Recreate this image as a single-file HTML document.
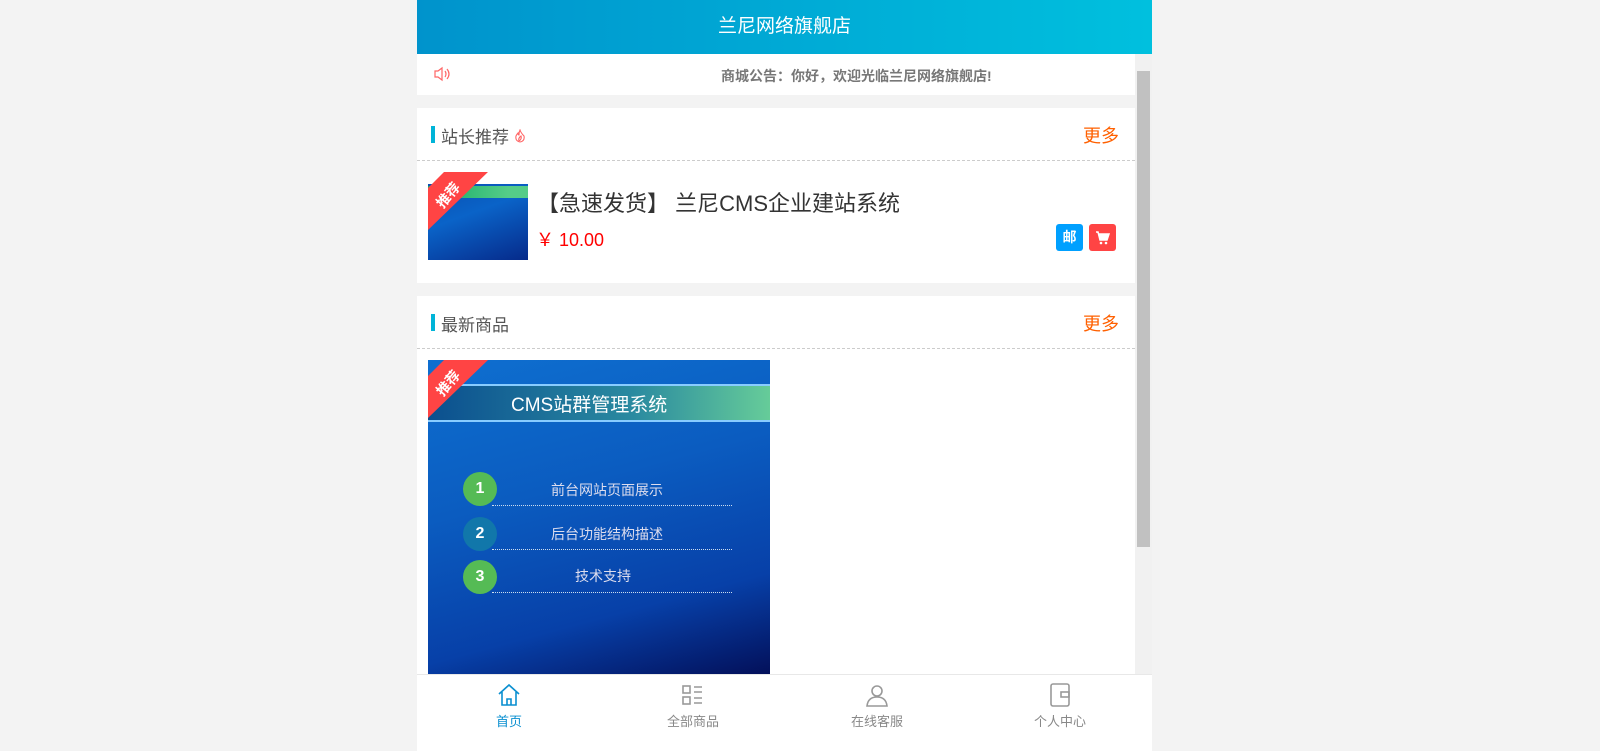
<!DOCTYPE html>
<html><head><meta charset="utf-8"><style>
*{margin:0;padding:0;box-sizing:border-box}
body{width:1600px;height:751px;background:#f3f3f3;font-family:"Liberation Sans","Noto Sans CJK SC",sans-serif;overflow:hidden;position:relative}
.wrap{position:absolute;left:417px;top:0;width:735px;height:751px}
.hd{height:54px;background:linear-gradient(90deg,#0093cc,#00c0de);color:#fff;font-size:19px;text-align:center;line-height:54px}
.sb{position:absolute;left:718px;top:54px;width:17px;height:620px;background:#f1f1f1}
.sb .t{position:absolute;left:2px;top:17px;width:13px;height:476px;background:#c1c1c1}
.note{position:absolute;top:54px;left:0;width:718px;height:41px;background:#fff}
.note span{position:absolute;left:304px;top:12px;font-size:14px;color:#777;font-weight:bold}
.sec{position:absolute;left:0;width:718px;background:#fff}
.ttl{height:53px;border-bottom:1px dashed #ccc;position:relative}
.ttl .b{position:absolute;left:14px;top:18px;width:4px;height:17px;background:#00b4d8}
.ttl .n{position:absolute;left:24px;top:15px;font-size:17px;color:#555}
.ttl .m{position:absolute;right:16px;top:14px;font-size:18px;color:#ff6000}
.rib{position:absolute;left:11px;width:60px;height:60px}
.rib .r{position:absolute;left:0;top:0;width:60px;height:60px;background:#f44;clip-path:polygon(16px 0,60px 0,0 58px,0 16px)}
.rib span{position:absolute;left:2px;top:13px;width:36px;text-align:center;color:#fff;font-size:14px;font-weight:bold;transform:rotate(-50deg)}
.nav{position:absolute;left:0;top:674px;width:735px;height:77px;background:#fff;border-top:1px solid #e8e8e8}
.nav div{position:absolute;top:0;width:184px;text-align:center;font-size:13px;color:#888}
.nav svg{display:block;margin:8px auto 4px}
</style></head><body>
<div class="wrap">
<div class="hd">兰尼网络旗舰店</div>
<div class="note"><svg style="position:absolute;left:16px;top:12px" width="20" height="16" viewBox="0 0 20 16" fill="none" stroke="#f66" stroke-width="1.2"><path d="M2 5h3l4-3v12l-4-3H2z"/><path d="M12 5q2 3 0 6M14 3q4 5 0 10"/></svg><span>商城公告：你好，欢迎光临兰尼网络旗舰店!</span></div>
<div class="sec" style="top:108px;height:175px">
<div class="ttl"><div class="b"></div><div class="n">站长推荐 <svg width="12" height="14" viewBox="0 0 12 14" fill="none" stroke="#f66" stroke-width="1.1"><path d="M6 1q1 3 4 6q1 5-4 6q-5-1-4-6q1-2 2-3q0 2 1 2q0-3 1-5zM5 12q-1-3 2-5q1 3-2 5"/></svg></div><div class="m">更多</div></div>
<div style="position:absolute;left:11px;top:76px;width:100px;height:76px;background:linear-gradient(160deg,#0a4fb0,#0a63c8 40%,#062a8a)"><div style="margin-top:2px;height:12px;background:linear-gradient(90deg,#1a6,#5c8 80%)"></div></div>
<div class="rib" style="top:64px"><div class="r"></div><span>推荐</span></div>
<div style="position:absolute;left:120px;top:78px;font-size:22px;color:#333">【急速发货】 兰尼CMS企业建站系统</div>
<div style="position:absolute;left:119px;top:118px;font-size:18px;color:#f00">￥ 10.00</div>
<div style="position:absolute;left:639px;top:116px;width:27px;height:27px;background:#00a0ff;border-radius:3px;color:#fff;font-size:14px;text-align:center;line-height:27px;font-weight:bold">邮</div>
<div style="position:absolute;left:672px;top:116px;width:27px;height:27px;background:#f44;border-radius:3px"><svg width="27" height="27" viewBox="0 0 27 27"><path d="M7 8h2l2 8h7l2-6H10" fill="#fff" stroke="#fff" stroke-width="1.5"/><circle cx="12" cy="19" r="1.3" fill="#fff"/><circle cx="17" cy="19" r="1.3" fill="#fff"/></svg></div>
</div>
<div class="sec" style="top:296px;height:378px">
<div class="ttl"><div class="b"></div><div class="n">最新商品</div><div class="m">更多</div></div>
<div style="position:absolute;left:11px;top:64px;width:342px;height:314px;background:linear-gradient(165deg,#0e6fd0,#0b5cc0 40%,#0740a8 75%,#03105a);overflow:hidden">
<div style="position:absolute;left:0;top:24px;width:342px;height:38px;background:linear-gradient(90deg,#0b4f8f,#2a8aa0 60%,#6c9 100%);border-top:2px solid #8cf;border-bottom:2px solid #8cf"></div>
<div style="position:absolute;left:83px;top:30px;color:#fff;font-size:19px">CMS站群管理系统</div>
<div style="position:absolute;left:35px;top:112px;width:34px;height:34px;border-radius:50%;background:#5b5;color:#fff;text-align:center;line-height:34px;font-weight:bold">1</div>
<div style="position:absolute;left:123px;top:120px;color:#dde;font-size:14px">前台网站页面展示</div>
<div style="position:absolute;left:64px;top:145px;width:240px;border-top:1px dotted #cde"></div>
<div style="position:absolute;left:35px;top:157px;width:34px;height:34px;border-radius:50%;background:#17a;color:#fff;text-align:center;line-height:34px;font-weight:bold">2</div>
<div style="position:absolute;left:123px;top:164px;color:#dde;font-size:14px">后台功能结构描述</div>
<div style="position:absolute;left:64px;top:189px;width:240px;border-top:1px dotted #cde"></div>
<div style="position:absolute;left:35px;top:200px;width:34px;height:34px;border-radius:50%;background:#5b5;color:#fff;text-align:center;line-height:34px;font-weight:bold">3</div>
<div style="position:absolute;left:147px;top:206px;color:#dde;font-size:14px">技术支持</div>
<div style="position:absolute;left:64px;top:232px;width:240px;border-top:1px dotted #cde"></div>
</div>
<div class="rib" style="top:64px"><div class="r"></div><span>推荐</span></div>
</div>
<div class="sb"><div class="t"></div></div>
<div class="nav">
<div style="left:0;color:#0a8fd0"><svg width="24" height="24" viewBox="0 0 24 24" fill="none" stroke="#0a8fd0" stroke-width="1.6"><path d="M2 11L12 2l10 9M5 9v13h14V9M10 22v-6h4v6"/></svg>首页</div>
<div style="left:184px"><svg width="24" height="24" viewBox="0 0 24 24" fill="none" stroke="#999" stroke-width="1.6"><rect x="2" y="3" width="7" height="7"/><rect x="2" y="14" width="7" height="7"/><path d="M13 4h8M13 9h8M13 15h8M13 20h8"/></svg>全部商品</div>
<div style="left:368px"><svg width="24" height="24" viewBox="0 0 24 24" fill="none" stroke="#999" stroke-width="1.6"><circle cx="12" cy="8" r="5"/><path d="M2 23q1-9 10-9t10 9z"/></svg>在线客服</div>
<div style="left:551px"><svg width="24" height="24" viewBox="0 0 24 24" fill="none" stroke="#999" stroke-width="1.6"><rect x="3" y="1" width="18" height="22" rx="2"/><rect x="13" y="9" width="8" height="5"/></svg>个人中心</div>
</div>
</div>
</body></html>
